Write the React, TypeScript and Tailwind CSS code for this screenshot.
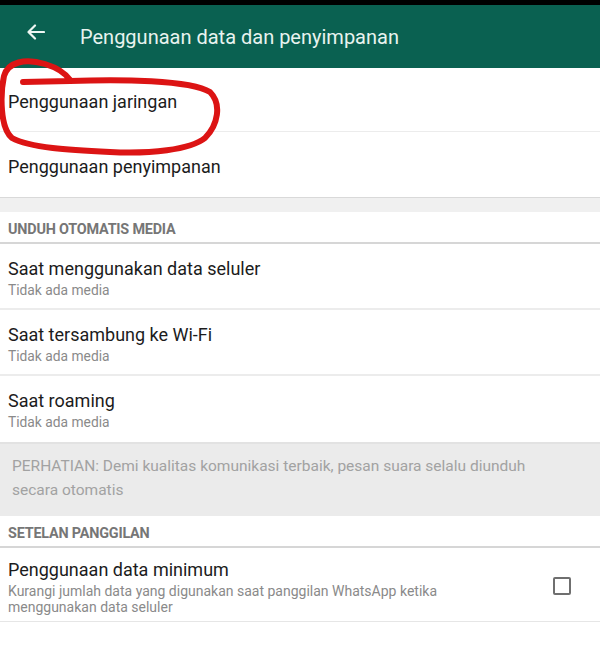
import React from "react";

const mediaRows = [
  { title: "Saat menggunakan data seluler", sub: "Tidak ada media" },
  { title: "Saat tersambung ke Wi-Fi", sub: "Tidak ada media" },
  { title: "Saat roaming", sub: "Tidak ada media" },
];

function SectionHeader({ label }: { label: string }) {
  return (
    <div className="h-[32px] flex items-end pb-[3px] px-2 border-b-2 border-[#d6d6d6]">
      <span className="text-[14.4px] leading-[18px] font-bold text-[#767676] tracking-[-0.2px]">{label}</span>
    </div>
  );
}

export default function App() {
  return (
    <div className="relative w-[600px] h-[663px] bg-white overflow-hidden font-['Roboto',sans-serif]">
      <div className="h-[5px] bg-black" />

      <header className="h-[63px] bg-[#0a6151] flex items-center">
        <div className="w-[80px] flex items-center pl-[27px] -mt-[10px]">
          <svg width="18" height="16" viewBox="0 0 18 16" fill="none" stroke="#eef6f3" strokeWidth="2.2" strokeLinecap="round" strokeLinejoin="round">
            <path d="M17 8H2M8 1.5L1.5 8 8 14.5" />
          </svg>
        </div>
        <h1 className="text-[20px] text-[#e8f3ef]">Penggunaan data dan penyimpanan</h1>
      </header>

      <div className="h-[64px] flex items-center pt-[4px] px-2 border-b border-[#ececec]">
        <span className="text-[18px] text-[#1c1c1c]">Penggunaan jaringan</span>
      </div>
      <div className="h-[66px] flex items-center pt-[3px] px-2 border-b border-[#d9d9d9]">
        <span className="text-[18px] text-[#1c1c1c]">Penggunaan penyimpanan</span>
      </div>
      <div className="h-[14px] bg-[#f0f0f0]" />

      <SectionHeader label="UNDUH OTOMATIS MEDIA" />

      {mediaRows.map((r, i) => (
        <div
          key={r.title}
          className={`h-[66px] flex flex-col pt-[14px] px-2 ${i < 2 ? "border-b-2 border-[#ececec]" : ""}`}
        >
          <span className="text-[18px] leading-[22px] text-[#1c1c1c]">{r.title}</span>
          <span className="text-[13.8px] leading-[20px] text-[#8a8a8a]">{r.sub}</span>
        </div>
      ))}

      <div className="h-[74px] bg-[#ebebeb] px-3 pt-[10px] border-t-2 border-[#e2e2e2]">
        <p className="text-[15.5px] leading-[24px] text-[#a2a2a2] w-[560px]">
          PERHATIAN: Demi kualitas komunikasi terbaik, pesan suara selalu diunduh secara otomatis
        </p>
      </div>

      <SectionHeader label="SETELAN PANGGILAN" />

      <div className="h-[74px] flex items-start px-2 pt-[11px] border-b border-[#e6e6e6]">
        <div className="flex-1 flex flex-col">
          <span className="text-[18px] leading-[22px] text-[#1c1c1c]">Penggunaan data minimum</span>
          <span className="text-[14px] leading-[16px] mt-[2px] text-[#8a8a8a] w-[460px]">
            Kurangi jumlah data yang digunakan saat panggilan WhatsApp ketika menggunakan data seluler
          </span>
        </div>
        <div className="w-[18px] h-[18px] border-2 border-[#6f6f6f] rounded-[2px] mr-[21px] mt-[18px]" />
      </div>

      <svg className="absolute left-0 top-0 pointer-events-none" width="240" height="170" viewBox="0 0 240 170" fill="none">
        <path
          d="M23 82 L70 81 C120 79 190 80 210 92 C222 104 218 125 205 138 C190 150 150 154 110 152 C70 150 30 148 12 138 C0 128 0 95 4 76 C8 62 25 58 45 64 C58 68 66 74 70 80"
          stroke="#dc1414"
          strokeWidth="6"
          strokeLinecap="round"
          strokeLinejoin="round"
        />
      </svg>
    </div>
  );
}
